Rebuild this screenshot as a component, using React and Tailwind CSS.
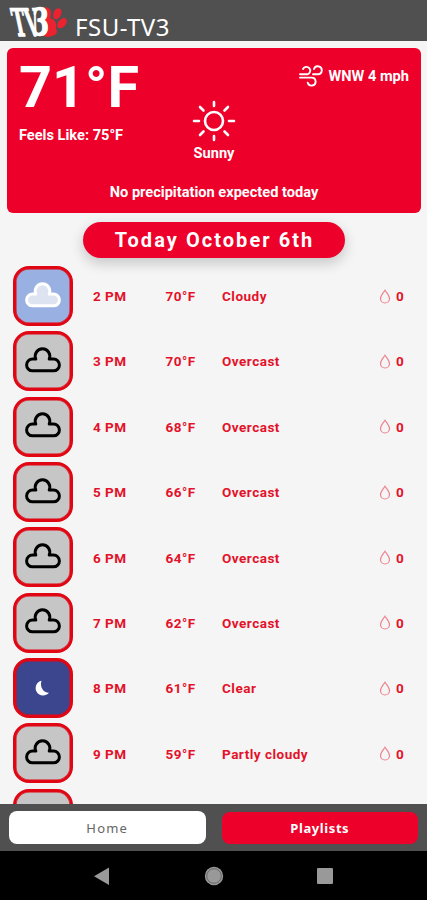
const HOURS = [
  { time: "2 PM", temp: "70°F", sky: "Cloudy", kind: "cloudy" },
  { time: "3 PM", temp: "70°F", sky: "Overcast", kind: "overcast" },
  { time: "4 PM", temp: "68°F", sky: "Overcast", kind: "overcast" },
  { time: "5 PM", temp: "66°F", sky: "Overcast", kind: "overcast" },
  { time: "6 PM", temp: "64°F", sky: "Overcast", kind: "overcast" },
  { time: "7 PM", temp: "62°F", sky: "Overcast", kind: "overcast" },
  { time: "8 PM", temp: "61°F", sky: "Clear", kind: "night" },
  { time: "9 PM", temp: "59°F", sky: "Partly cloudy", kind: "overcast" },
];

const TILE = {
  cloudy: "bg-[#98b1e2]",
  overcast: "bg-[#c6c6c6]",
  night: "bg-[#3c468f]",
};

function Logo() {
  return (
    <svg className="h-[41px] w-[70px] shrink-0 overflow-visible" viewBox="0 0 70 41">
      <g fill="#ec2230">
        <path d="M45 7q6 1 6 5 0 4-1 6 5 1 6 6 0 5 1 8-1 4-9 5l-5-1z" />
        <ellipse cx="57.300" cy="13.700" rx="3.800" ry="5.800" transform="rotate(24 57.300 13.700)" />
        <ellipse cx="62" cy="23.200" rx="3.800" ry="5.900" transform="rotate(40 62 23.200)" />
      </g>
      <g fill="#fff" stroke="#fff" strokeLinejoin="round" fontFamily="DejaVu Serif, serif" fontWeight="700">
        <text x="8" y="35.500" fontSize="38" textLength="26" lengthAdjust="spacingAndGlyphs" strokeWidth="1.300" transform="skewX(12)">TV</text>
        <text x="32" y="35.300" fontSize="37" textLength="17" lengthAdjust="spacingAndGlyphs" strokeWidth="1.400">3</text>
      </g>
    </svg>
  );
}

function Cloud({ day }) {
  return (
    <svg className="h-[26px] w-9" viewBox="0 0 36 26">
      <path
        d="M7.500 23.800h21a5.900 5.900 0 0 0 0-11.800h-4.300a7.300 7.300 0 1 0-13.400 0H7.500a5.900 5.900 0 0 0 0 11.800z"
        fill={day ? "#dde3f1" : "none"}
        stroke={day ? "#fff" : "#000"}
        strokeWidth="3"
        strokeLinejoin="round"
      />
    </svg>
  );
}

function Moon() {
  return (
    <svg className="mr-[3px] mt-[3px] h-4 w-4" viewBox="0 0 16 16">
      <path d="M7.500 .700A7.500 7.500 0 1 0 15 12.700C9.500 13 5.500 7 7.500 .700z" fill="#fff" />
    </svg>
  );
}

function Drop() {
  return (
    <svg className="h-[15px] w-3" viewBox="0 0 12 15">
      <path d="M6 1.200C4.200 4 1.500 6.500 1.500 9.500a4.500 4.500 0 0 0 9 0C10.500 6.500 7.800 4 6 1.200z" fill="none" stroke="#ed8391" strokeWidth="1.200" />
    </svg>
  );
}

function Wind() {
  return (
    <svg className="h-[22px] w-6" viewBox="0 0 24 22" fill="none" stroke="#fff" strokeWidth="1.900" strokeLinecap="round">
      <path d="M1 9.300h7.500a3.800 3.800 0 1 0-4.500-5.300" />
      <path d="M15 4A4 4 0 1 1 19 9.300h-5" />
      <path d="M1 12.600h11.500a4 4 0 1 1-3.800 5" />
    </svg>
  );
}

function Sun() {
  return (
    <svg className="h-[42px] w-[44px]" viewBox="-22 -21 44 42" fill="none" stroke="#fff" strokeWidth="2.600" strokeLinecap="round">
      <circle r="9" />
      <path d="M0-19v4M0 15v4M-20 0h5M15 0h5M-14-14l3.500 3.500M10.500 10.500l3.500 3.500M-14 14l3.500-3.500M10.500-10.500l3.500-3.500" />
    </svg>
  );
}

function Tile({ kind }) {
  return (
    <div className={`flex h-[60px] w-[60px] shrink-0 items-center justify-center rounded-[16px] border-[3px] border-[#e00613] pb-[3px] shadow-[inset_0_0_0_0.5px_#e00613] ${TILE[kind]}`}>
      {kind === "night" ? <Moon /> : <Cloud day={kind === "cloudy"} />}
    </div>
  );
}

function Hour({ hour }) {
  return (
    <li className="flex h-[65.350px] shrink-0 items-start pl-[13px]">
      <Tile kind={hour.kind} />
      <div className="flex h-[60.500px] grow items-center pl-5 text-[13.500px] font-bold tracking-[0.500px] text-[#e3122a]">
        <span className="w-[72.500px]">{hour.time}</span>
        <span className="w-[56.500px]">{hour.temp}</span>
        <span className="w-[157px]">{hour.sky}</span>
        <Drop />
        <span className="pl-[5px]">0</span>
      </div>
    </li>
  );
}

export default function App() {
  return (
    <div className="flex h-[900px] w-[427px] flex-col overflow-hidden bg-[#f5f5f5] font-['Roboto',sans-serif]">
      <header className="flex h-[41px] shrink-0 items-start bg-[#505050]">
        <Logo />
        <h1 className="pl-[5px] pt-[11px] font-['Noto_Sans',sans-serif] text-[24px] leading-8 tracking-[0.500px] text-white">FSU-TV3</h1>
      </header>
      <main className="flex min-h-0 grow flex-col overflow-hidden">
        <section className="ml-[7px] mr-[6px] mt-[6.500px] flex h-[165.500px] shrink-0 flex-col rounded-md bg-[#ed0029] text-[14.600px] font-bold leading-5 text-white">
          <div className="flex h-[99px] justify-between pl-3 pr-3">
            <div>
              <p className="pt-[11px] text-[57.500px] leading-[58px]">71°F</p>
              <p className="pt-[8px]">Feels Like: 75°F</p>
            </div>
            <div className="mt-[17px] flex h-[22px] items-center gap-1.5">
              <Wind />
              <span>WNW 4 mph</span>
            </div>
          </div>
          <div className="-mt-[47px] flex flex-col items-center">
            <Sun />
            <p className="pt-px">Sunny</p>
          </div>
          <p className="pt-[19px] text-center">No precipitation expected today</p>
        </section>
        <h2 className="mt-[9px] flex h-[35.500px] w-[262px] shrink-0 items-center justify-center self-center rounded-full bg-[#ed0029] pl-[2px] text-xl font-bold tracking-[2.050px] text-white shadow-[0_5px_14px_rgba(0,0,0,0.2)]">
          Today October 6th
        </h2>
        <ul className="flex flex-col pt-[8.500px]">
          {HOURS.map((hour) => (
            <Hour key={hour.time} hour={hour} />
          ))}
          <li className="pl-[13px]">
            <Tile kind="overcast" />
          </li>
        </ul>
      </main>
      <nav className="flex h-[47px] shrink-0 items-start gap-4 bg-[#505050] px-[9px] pt-[7px] font-['Noto_Sans',sans-serif] text-[13px] leading-5">
        <button className="h-[33px] flex-1 rounded-lg bg-white pt-px tracking-[1.200px] text-[#666]">Home</button>
        <button className="mt-px h-[32px] flex-1 rounded-lg bg-[#ed0029] font-bold tracking-[0.600px] text-white">Playlists</button>
      </nav>
      <div className="flex h-[49px] shrink-0 items-center bg-black pl-[93px]">
        <svg className="h-5 w-4" viewBox="0 0 16 20"><path d="M16 1.500v17.500L1 10.250z" fill="#999" /></svg>
        <svg className="ml-[95px] h-5 w-5" viewBox="0 0 20 20"><circle cx="10" cy="10" r="9.200" fill="#999" /><circle cx="10" cy="10" r="7.300" fill="none" stroke="#666" strokeWidth="1" /></svg>
        <div className="ml-[93px] h-4 w-4 rounded-[1px] bg-[#999]" />
      </div>
    </div>
  );
}
